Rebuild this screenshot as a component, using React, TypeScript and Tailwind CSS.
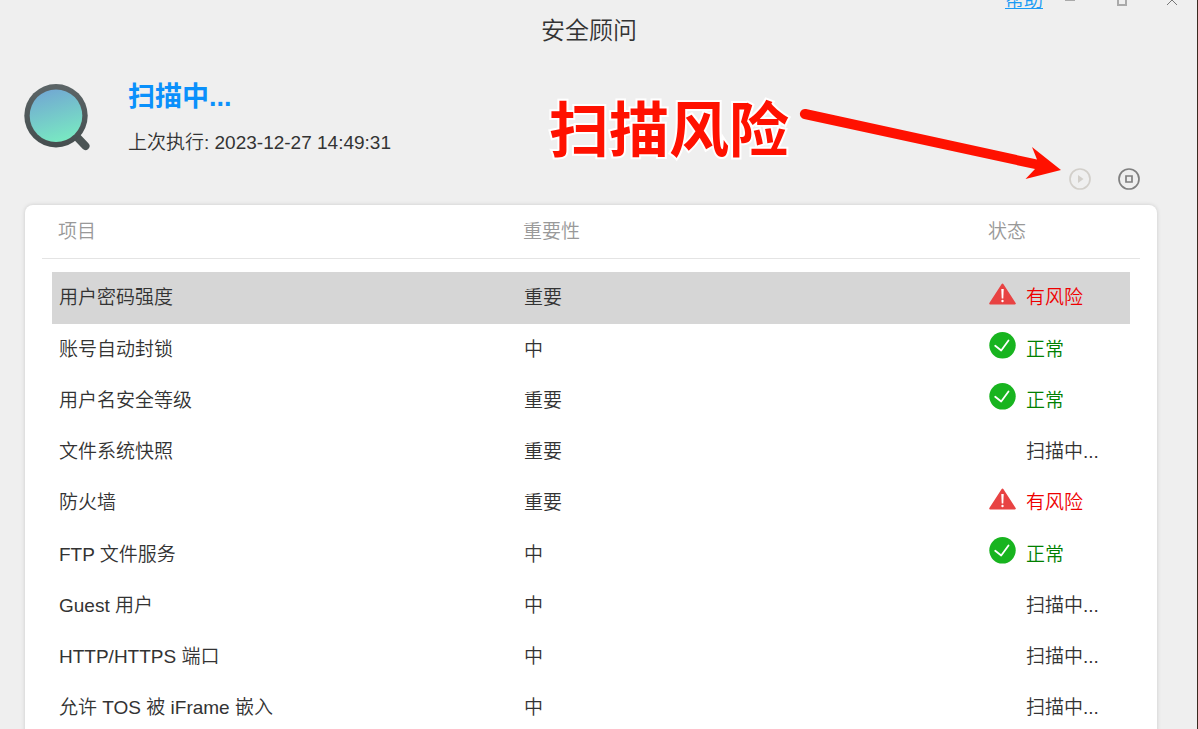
import { useState } from "react";

type Status = "risk" | "ok" | "scanning";

type CheckItem = {
  name: string;
  level: string;
  status: Status;
};

const items: CheckItem[] = [
  { name: "用户密码强度", level: "重要", status: "risk" },
  { name: "账号自动封锁", level: "中", status: "ok" },
  { name: "用户名安全等级", level: "重要", status: "ok" },
  { name: "文件系统快照", level: "重要", status: "scanning" },
  { name: "防火墙", level: "重要", status: "risk" },
  { name: "FTP 文件服务", level: "中", status: "ok" },
  { name: "Guest 用户", level: "中", status: "scanning" },
  { name: "HTTP/HTTPS 端口", level: "中", status: "scanning" },
  { name: "允许 TOS 被 iFrame 嵌入", level: "中", status: "scanning" },
];

const statusText: Record<Status, string> = {
  risk: "有风险",
  ok: "正常",
  scanning: "扫描中...",
};

const statusColor: Record<Status, string> = {
  risk: "text-[#ee0000]",
  ok: "text-[#008000]",
  scanning: "text-[#333333]",
};

function Magnifier() {
  return (
    <svg width="68" height="68" viewBox="0 0 68 68" aria-hidden="true">
      <defs>
        <linearGradient id="lens" x1="0.35" y1="0" x2="0.65" y2="1">
          <stop offset="0" stopColor="#72a9d2" />
          <stop offset="1" stopColor="#79eac2" />
        </linearGradient>
        <linearGradient id="rim" x1="0" y1="0" x2="0" y2="1">
          <stop offset="0" stopColor="#5c6567" />
          <stop offset="1" stopColor="#454d4e" />
        </linearGradient>
      </defs>
      <path d="M52 52 61.500 62" stroke="#4b5454" strokeWidth="8" strokeLinecap="round" />
      <circle cx="32" cy="31.700" r="31.700" fill="url(#rim)" />
      <circle cx="32" cy="31.700" r="26.300" fill="url(#lens)" />
    </svg>
  );
}

function StatusIcon({ status }: { status: Status }) {
  if (status === "risk") {
    return (
      <svg width="27" height="27" viewBox="0 0 27 27" aria-hidden="true">
        <path
          d="M13.500 3.500 25.800 22.500H1.200Z"
          fill="#e84343"
          stroke="#e84343"
          strokeWidth="2"
          strokeLinejoin="round"
        />
        <path d="M12.300 8h2.400l-.4 9.500h-1.600Z" fill="#fff" />
        <circle cx="13.500" cy="20" r="1.200" fill="#fff" />
      </svg>
    );
  }
  if (status === "ok") {
    return (
      <svg width="27" height="27" viewBox="0 0 27 27" aria-hidden="true">
        <circle cx="13.500" cy="13.300" r="13.200" fill="#18b41f" />
        <path
          d="m6.200 13.700 6 4.800 7.300-10"
          fill="none"
          stroke="#fff"
          strokeWidth="1.800"
          strokeLinecap="round"
          strokeLinejoin="round"
        />
      </svg>
    );
  }
  return null;
}

export default function App() {
  const [selected, setSelected] = useState(0);

  return (
    <div className="relative h-screen overflow-hidden border-r border-[#3a2a20] bg-[#efefef] font-['Liberation_Sans','Noto_Sans_CJK_SC',sans-serif] text-[19px] font-[350] text-[#333333]">
      {/* window bar, scrolled partly out of view */}
      <div className="-mt-[15px] flex h-8 items-center justify-end pr-[18px] text-[#aaaaaa]">
        <a href="#help" className="mr-5 leading-8 text-[#1a9bf5] underline">
          帮助
        </a>
        <button aria-label="最小化" className="mr-10">
          <svg width="14" height="14" viewBox="0 0 14 14" stroke="currentColor" strokeWidth="2">
            <path d="M2 6h10" />
          </svg>
        </button>
        <button aria-label="最大化" className="mr-9">
          <svg width="12" height="12" viewBox="0 0 12 12" fill="none" stroke="currentColor" strokeWidth="2">
            <path d="M1 1h8v9H1Z" />
          </svg>
        </button>
        <button aria-label="关闭">
          <svg width="14" height="14" viewBox="0 0 14 14" stroke="#777777" strokeWidth="1">
            <path d="m2 1 10 10M12 1 2 11" />
          </svg>
        </button>
      </div>

      <h1 className="-mt-1 pr-[19px] text-center text-2xl leading-9">安全顾问</h1>

      <header className="mt-7 flex pl-6">
        <div className="pt-[7px]">
          <Magnifier />
        </div>
        <div className="ml-9">
          <h2 className="text-[27px] leading-10 font-bold text-[#0a90fb]">扫描中...</h2>
          <p className="mt-3 leading-7">上次执行: 2023-12-27 14:49:31</p>
        </div>
      </header>

      <div className="mt-[11px] flex justify-end gap-[27px] pr-[57px]">
        <button aria-label="开始扫描" disabled>
          <svg width="22" height="22" viewBox="0 0 22 22" fill="none" stroke="#d2cfca">
            <circle cx="11" cy="11" r="10" strokeWidth="1.700" />
            <path d="M9 7v8l5.500-4Z" fill="#d2cfca" stroke="none" />
          </svg>
        </button>
        <button aria-label="停止扫描">
          <svg width="22" height="22" viewBox="0 0 22 22" fill="none" stroke="#808080">
            <circle cx="11" cy="11" r="10" strokeWidth="1.700" />
            <path d="M8 8h6v6H8Z" strokeWidth="1.700" />
          </svg>
        </button>
      </div>

      <main className="mt-[15px] mr-10 ml-[25px] min-h-screen rounded-lg bg-white px-[17px] shadow-[0_0_4px_rgba(0,0,0,0.15)]">
        <table className="block text-left">
          <thead className="block border-b border-[#e4e4e4] text-[#999999]">
            <tr className="grid h-[53px] grid-cols-[465fr_465fr_136fr] items-center px-4 pt-[2px]">
              <th className="font-[350]">项目</th>
              <th className="font-[350]">重要性</th>
              <th className="font-[350]">状态</th>
            </tr>
          </thead>
          <tbody className="mx-[10px] mt-[13px] block">
            {items.map((item, i) => (
              <tr
                key={item.name}
                onClick={() => setSelected(i)}
                className={`grid h-[51px] grid-cols-[465fr_465fr_134fr] items-center px-[7px] leading-7 [&:nth-child(4n+1)]:h-[52px] ${
                  i === selected ? "bg-[#d6d6d6]" : ""
                }`}
              >
                <td>{item.name}</td>
                <td>{item.level}</td>
                <td className={`flex items-center gap-[10px] whitespace-nowrap ${statusColor[item.status]}`}>
                  <span className="w-[27px] shrink-0 pb-2">
                    <StatusIcon status={item.status} />
                  </span>
                  {statusText[item.status]}
                </td>
              </tr>
            ))}
          </tbody>
        </table>
      </main>

      {/* callout drawn over the page */}
      <div className="pointer-events-none absolute top-[86px] right-[136px] flex items-start">
        <strong className="text-[60px] leading-[92px] font-bold text-[#ff1100] [-webkit-text-stroke:4px_white] [paint-order:stroke_fill]">
          扫描风险
        </strong>
        <svg className="ml-[10px]" width="262" height="100" viewBox="0 0 262 100" fill="#ff1100" aria-hidden="true">
          <path d="M7 23 238 73.500 233 61 262 84 226.500 93 236 83 5 33A5 5 0 0 1 7 23Z" />
        </svg>
      </div>
    </div>
  );
}
